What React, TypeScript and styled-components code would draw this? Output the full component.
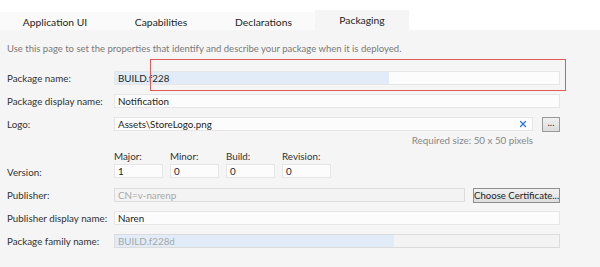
import styled, { createGlobalStyle } from "styled-components";
import { X } from "lucide-react";

const GlobalStyle = createGlobalStyle`
  html, body {
    margin: 0;
    padding: 0;
    background: #f5f5f5;
  }
  body {
    font-family: Lato, "Open Sans", sans-serif;
    font-size: 9.8px;
    color: #2b2b2b;
  }
`;

const tabs = ["Application UI", "Capabilities", "Declarations", "Packaging"];
const tabWidths = [110, 102, 103, 94];

function App() {
  return (
    <Page>
      <GlobalStyle />
      <TabBar>
        {tabs.map((t, i) => (
          <Tab key={t} $w={tabWidths[i]} $active={i === 3}>
            {t}
          </Tab>
        ))}
      </TabBar>
      <Content>
        <Description>
          Use this page to set the properties that identify and describe your package when it is deployed.
        </Description>

        <Form>
          <Row>
            <Label>Package name:</Label>
            <Field>
              <Selection $w={274} />
              <FieldText>BUILD.f228</FieldText>
            </Field>
          </Row>

          <Row>
            <Label>Package display name:</Label>
            <Field>
              <FieldText>Notification</FieldText>
            </Field>
          </Row>

          <LogoRow>
            <Label>Logo:</Label>
            <LogoCol>
              <LogoLine>
                <Field $grow>
                  <FieldText>Assets\StoreLogo.png</FieldText>
                  <ClearBtn>
                    <X size={10} strokeWidth={3} />
                  </ClearBtn>
                </Field>
                <SmallButton>...</SmallButton>
              </LogoLine>
              <Hint>Required size: 50 x 50 pixels</Hint>
            </LogoCol>
          </LogoRow>

          <VersionRow>
            <Label>Version:</Label>
            <VersionParts>
              {[
                ["Major:", "1"],
                ["Minor:", "0"],
                ["Build:", "0"],
                ["Revision:", "0"],
              ].map(([l, v]) => (
                <VersionPart key={l}>
                  <SubLabel>{l}</SubLabel>
                  <Field $width={49}>
                    <FieldText>{v}</FieldText>
                  </Field>
                </VersionPart>
              ))}
            </VersionParts>
          </VersionRow>

          <Row>
            <Label>Publisher:</Label>
            <PublisherLine>
              <Field $grow $disabled>
                <FieldText $disabled>CN=v-narenp</FieldText>
              </Field>
              <CertButton>Choose Certificate...</CertButton>
            </PublisherLine>
          </Row>

          <Row>
            <Label>Publisher display name:</Label>
            <Field>
              <FieldText>Naren</FieldText>
            </Field>
          </Row>

          <Row>
            <Label>Package family name:</Label>
            <Field $disabled>
              <Selection $w={279} />
              <FieldText $disabled>BUILD.f228d</FieldText>
            </Field>
          </Row>
        </Form>

        <Highlight />
      </Content>
    </Page>
  );
}

const Page = styled.div`
  width: 600px;
  height: 267px;
  overflow: hidden;
  background: #f5f5f5;
`;

const TabBar = styled.div`
  display: flex;
  align-items: flex-end;
  height: 30px;
  background: #ffffff;
`;

const Tab = styled.div<{ $w: number; $active?: boolean }>`
  width: ${(p) => p.$w}px;
  height: ${(p) => (p.$active ? 20 : 18)}px;
  display: flex;
  align-items: center;
  justify-content: center;
  padding-top: ${(p) => (p.$active ? 0 : 1)}px;
  box-sizing: border-box;
  background: ${(p) => (p.$active ? "#f5f5f5" : "#fafafa")};
  color: #1e1e1e;
  font-size: 10.3px;
`;

const Content = styled.div`
  position: relative;
  padding: 11px 40px 0 7px;
`;

const Description = styled.div`
  color: #7a7a7a;
  font-size: 9.5px;
  line-height: 15px;
  margin-bottom: 15px;
`;

const Form = styled.div`
  display: flex;
  flex-direction: column;
`;

const Row = styled.div`
  display: flex;
  align-items: center;
  height: 14px;
  margin-bottom: 9px;
`;

const Label = styled.div`
  width: 107px;
  flex-shrink: 0;
  color: #333;
  white-space: nowrap;
`;

const Field = styled.div<{ $grow?: boolean; $disabled?: boolean; $width?: number }>`
  position: relative;
  display: flex;
  align-items: center;
  height: 14px;
  box-sizing: border-box;
  ${(p) => (p.$width ? `width: ${p.$width}px;` : "flex: 1;")}
  border: 1px solid ${(p) => (p.$disabled ? "#dcdcdc" : "#e6e6e6")};
  background: ${(p) => (p.$disabled ? "#f3f3f3" : "#fcfcfc")};
  padding-left: 3px;
  overflow: hidden;
`;

const FieldText = styled.span<{ $disabled?: boolean }>`
  position: relative;
  color: ${(p) => (p.$disabled ? "#a8a8a8" : "#1e1e1e")};
  white-space: nowrap;
  line-height: 12px;
`;

const Selection = styled.span<{ $w: number }>`
  position: absolute;
  left: 0;
  top: 0;
  bottom: 0;
  width: ${(p) => p.$w}px;
  background: #e1ecf8;
`;

const ClearBtn = styled.span`
  position: absolute;
  right: 4px;
  top: 1px;
  color: #2a74d4;
  display: flex;
`;

const LogoRow = styled.div`
  display: flex;
  align-items: flex-start;
  margin-bottom: 3px;
  & > ${Label} {
    line-height: 14px;
  }
`;

const LogoCol = styled.div`
  flex: 1;
  display: flex;
  flex-direction: column;
`;

const LogoLine = styled.div`
  display: flex;
  align-items: center;
  gap: 9px;
  height: 14px;
`;

const SmallButton = styled.div`
  width: 18px;
  height: 15px;
  box-sizing: border-box;
  border: 1px solid #9a9a9a;
  background: linear-gradient(#f0f0f0, #dcdcdc);
  font-size: 10px;
  line-height: 9px;
  text-align: center;
  color: #333;
`;

const Hint = styled.div`
  align-self: flex-end;
  margin-right: 27px;
  margin-top: 2px;
  color: #888;
  line-height: 14px;
`;

const VersionRow = styled.div`
  display: flex;
  align-items: flex-end;
  margin-bottom: 10px;
`;

const VersionParts = styled.div`
  display: flex;
  gap: 7px;
`;

const VersionPart = styled.div`
  display: flex;
  flex-direction: column;
`;

const SubLabel = styled.div`
  color: #333;
  line-height: 13px;
  margin-bottom: 1px;
`;

const PublisherLine = styled.div`
  flex: 1;
  display: flex;
  align-items: center;
  gap: 8px;
`;

const CertButton = styled.div`
  height: 15px;
  width: 87px;
  box-sizing: border-box;
  border: 1px solid #8f8f8f;
  background: linear-gradient(#f2f2f2, #dddddd);
  color: #1e1e1e;
  font-size: 9.6px;
  line-height: 13px;
  text-align: center;
  white-space: nowrap;
  overflow: hidden;
`;

const Highlight = styled.div`
  position: absolute;
  left: 150px;
  top: 29px;
  width: 416px;
  height: 32px;
  box-sizing: border-box;
  border: 1px solid #e05a5a;
  pointer-events: none;
`;

export default App;
